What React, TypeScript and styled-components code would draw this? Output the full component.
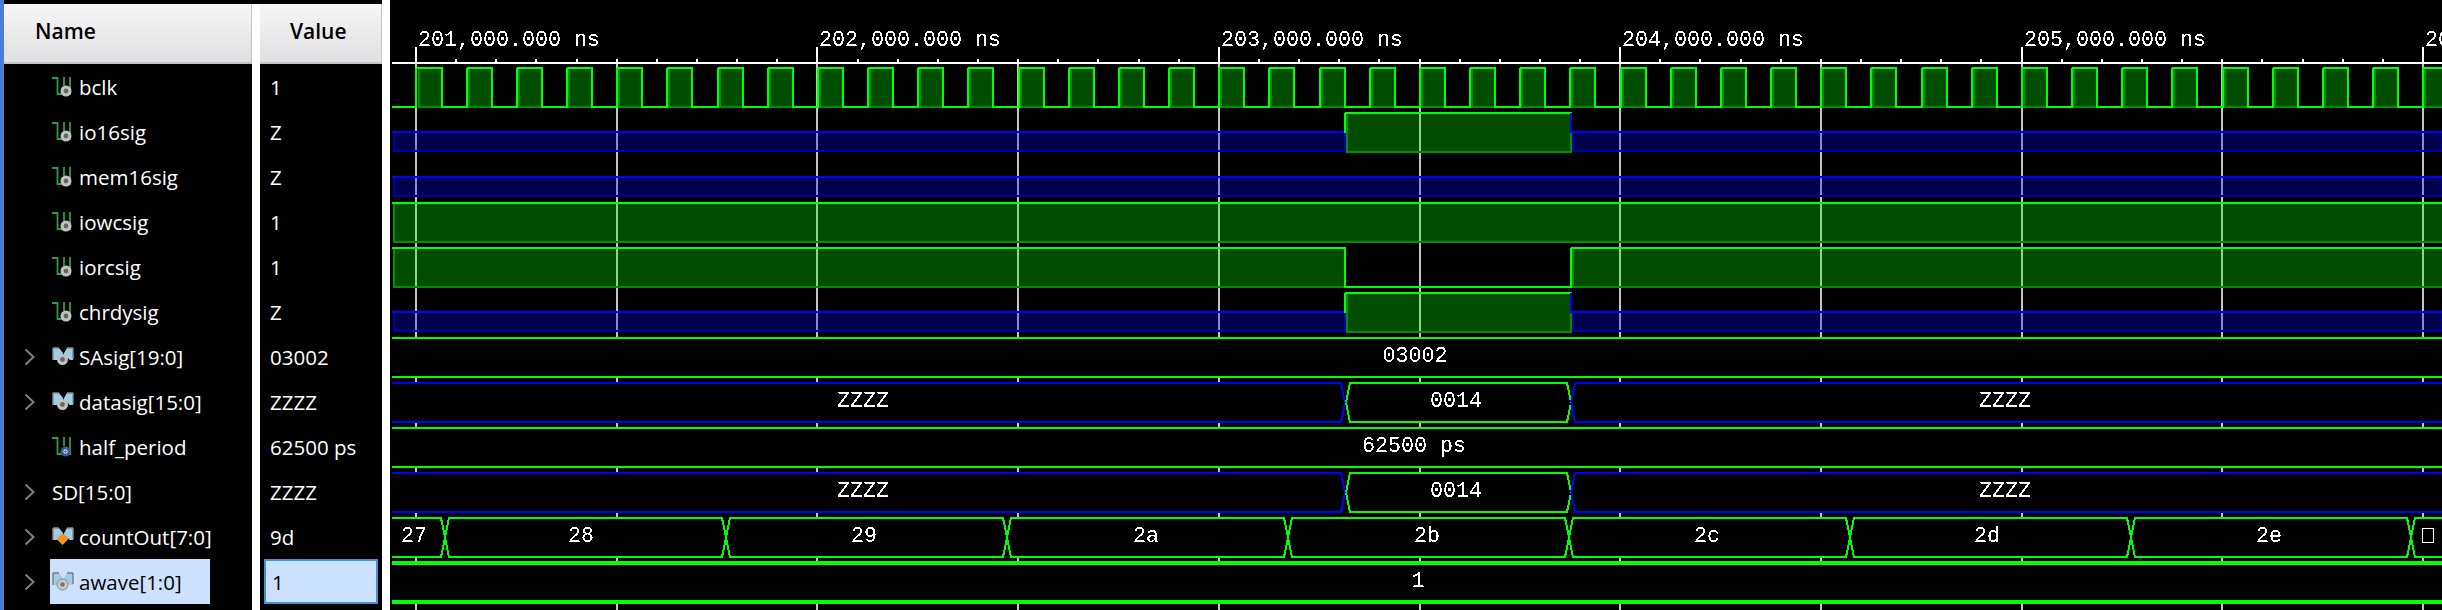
import { FC, ReactNode } from "react";
import styled, { createGlobalStyle } from "styled-components";

const GlobalStyle = createGlobalStyle`
  html, body {
    margin: 0;
    padding: 0;
    background: #ffffff;
    overflow: hidden;
  }
`;

const colors = {
  green: "#00ff00",
  greenEdge: "#008f00",
  greenFill: "rgba(0, 255, 0, 0.3)",
  blue: "#0000ff",
  blueEdge: "#0000a8",
  blueFill: "rgba(0, 0, 255, 0.3)",
  grid: "#c4c4c4",
  selected: "#cce0ff",
};

const Page = styled.div`
  display: flex;
  width: 2442px;
  height: 610px;
  background: #ffffff;
  font-family: "Open Sans", "Noto Sans", sans-serif;
  overflow: hidden;
`;

const Edge = styled.div`
  width: 4px;
  background: #4a7ed6;
`;

const Columns = styled.div`
  display: flex;
  padding-top: 4px;
  background: #000000;
`;

const Column = styled.div<{ $width: number }>`
  width: ${(p) => p.$width}px;
  background: #000000;
`;

const Sash = styled.div`
  width: 8px;
  background: #ffffff;
`;

const HeaderCell = styled.div<{ $indent: number }>`
  box-sizing: border-box;
  height: 60px;
  padding: 0 0 4px ${(p) => p.$indent}px;
  display: flex;
  align-items: center;
  background: linear-gradient(#f6f6f6, #e0e0e2);
  border-bottom: 2px solid #c6c6c6;
  border-right: 1px solid #c6c6c6;
  color: #000000;
  font-size: 21px;
  font-weight: 600;
`;

const NameRow = styled.div`
  height: 45px;
  display: flex;
  align-items: center;
`;

const Twisty = styled.div`
  width: 46px;
  padding-left: 20px;
  box-sizing: border-box;
  display: flex;
  align-items: center;
`;

const NameLabel = styled.div<{ $selected?: boolean }>`
  height: 45px;
  display: flex;
  align-items: center;
  gap: 5px;
  padding: 0 ${(p) => (p.$selected ? 28 : 0)}px 0 2px;
  background: ${(p) => (p.$selected ? colors.selected : "transparent")};
  color: ${(p) => (p.$selected ? "#000000" : "#ffffff")};
  font-size: 20.5px;
`;

const ValueRow = styled.div`
  height: 45px;
  padding-left: 10px;
  display: flex;
  align-items: center;
  color: #ffffff;
  font-size: 20.5px;
`;

const SelectedValue = styled.div`
  box-sizing: border-box;
  width: 114px;
  margin-left: -6px;
  height: 45px;
  padding-left: 6px;
  display: flex;
  align-items: center;
  background: ${colors.selected};
  border: 2px solid #3f93d3;
  color: #000000;
`;

const WavePane = styled.div`
  flex: 1;
  background: #000000;
  overflow: hidden;
`;

const WaveSvg = styled.svg`
  display: block;
`;

const WaveText = styled.text`
  font-family: "Liberation Mono", monospace;
  font-size: 21.67px;
  fill: #ffffff;
`;

// signal icons

type IconKind = "scalar" | "constant" | "bus" | "busDiamond" | "busSelected";

const Ring = () => (
  <>
    <circle cx="14" cy="15" r="5.5" fill="#c2c2c2" />
    <circle cx="14" cy="15" r="2.4" fill="#666666" />
  </>
);

const BusWings: FC<{ edge: string }> = ({ edge }) => (
  <>
    <path d="M1 2h6l4 5v6l-2 1H1z" fill="#9ccfe6" />
    <path d="M21 2h-6l-3 5v2l6 5h3z" fill="#9ccfe6" />
    <path d="M1 2h6M15 2h6M1 2v12M21 2v11" stroke={edge} strokeWidth="1.4" fill="none" />
  </>
);

const SignalIcon: FC<{ kind: IconKind }> = ({ kind }) => (
  <svg width="22" height="22" viewBox="0 0 22 22">
    {kind === "scalar" || kind === "constant" ? (
      <path
        d="M0 2h5.5v16H10M12 1v9M18 1v17h-3"
        stroke="#2f9a45"
        strokeWidth="1.8"
        fill="none"
      />
    ) : null}
    {kind === "scalar" && <Ring />}
    {kind === "constant" && (
      <>
        <circle cx="13.5" cy="15.5" r="5" fill="#3b5a96" />
        <circle cx="13.5" cy="15.5" r="1.7" fill="none" stroke="#ffffff" strokeWidth="1" />
      </>
    )}
    {kind === "bus" && (
      <>
        <BusWings edge="#8a8a8a" />
        <circle cx="10.5" cy="13.5" r="5.5" fill="#c2c2c2" />
        <circle cx="10.5" cy="13.5" r="2.4" fill="#666666" />
      </>
    )}
    {kind === "busDiamond" && (
      <>
        <BusWings edge="#8a8a8a" />
        <path d="M10.5 7l6 6-6 6-6-6z" fill="#f7941d" />
      </>
    )}
    {kind === "busSelected" && (
      <>
        <BusWings edge="#7a7a7a" />
        <circle cx="10.5" cy="13.5" r="5.5" fill="#c8c8c8" stroke="#888888" strokeWidth="1" />
        <circle cx="10.5" cy="13.5" r="2.2" fill="#777777" />
      </>
    )}
  </svg>
);

const Chevron = () => (
  <svg width="11" height="18" viewBox="0 0 11 18">
    <path d="M1.5 1.5l8 7.5-8 7.5" stroke="#808080" strokeWidth="2" fill="none" />
  </svg>
);

type Signal = {
  name: string;
  value: string;
  icon?: IconKind;
  expandable?: boolean;
  selected?: boolean;
};

const signals: Signal[] = [
  { name: "bclk", value: "1", icon: "scalar" },
  { name: "io16sig", value: "Z", icon: "scalar" },
  { name: "mem16sig", value: "Z", icon: "scalar" },
  { name: "iowcsig", value: "1", icon: "scalar" },
  { name: "iorcsig", value: "1", icon: "scalar" },
  { name: "chrdysig", value: "Z", icon: "scalar" },
  { name: "SAsig[19:0]", value: "03002", icon: "bus", expandable: true },
  { name: "datasig[15:0]", value: "ZZZZ", icon: "bus", expandable: true },
  { name: "half_period", value: "62500 ps", icon: "constant" },
  { name: "SD[15:0]", value: "ZZZZ", expandable: true },
  { name: "countOut[7:0]", value: "9d", icon: "busDiamond", expandable: true },
  { name: "awave[1:0]", value: "1", icon: "busSelected", expandable: true, selected: true },
];

// waveform drawing, coordinates are page pixels

const LEFT = 392;
const RIGHT = 2442;
const EDGE_A = 1345;
const EDGE_B = 1571;

type Level = "1" | "0" | "z";
type Span = { from: number; to: number; level: Level };

const BitTrace: FC<{ top: number; spans: Span[] }> = ({ top, spans }) => {
  const low = top + 39;
  const mid = top + 19;
  const fills: ReactNode[] = [];
  const lines: ReactNode[] = [];
  spans.forEach((s, i) => {
    const key = `${s.from}-${i}`;
    if (s.level === "1") {
      fills.push(
        <rect
          key={key}
          x={s.from + 2}
          y={top}
          width={s.to - s.from - 2}
          height={39}
          fill={colors.greenFill}
          stroke={colors.greenEdge}
          strokeWidth="2"
        />,
      );
      lines.push(<line key={key} x1={s.from} x2={s.to + 1} y1={top} y2={top} stroke={colors.green} strokeWidth="2" />);
    } else if (s.level === "z") {
      fills.push(
        <rect
          key={key}
          x={s.from + 2}
          y={mid}
          width={s.to - s.from - 2}
          height={19}
          fill={colors.blueFill}
          stroke={colors.blueEdge}
          strokeWidth="2"
        />,
      );
      lines.push(<line key={key} x1={s.from} x2={s.to} y1={mid} y2={mid} stroke={colors.blue} strokeWidth="2" />);
    } else {
      lines.push(<line key={key} x1={s.from} x2={s.to} y1={low} y2={low} stroke={colors.green} strokeWidth="2" />);
    }
    const next = spans[i + 1];
    if (next) {
      const pair = s.level + next.level;
      const edgeKey = `e${key}`;
      if (pair === "01" || pair === "10") {
        lines.push(<line key={edgeKey} x1={s.to} x2={s.to} y1={top} y2={low + 1} stroke={colors.green} strokeWidth="2" />);
      } else if (pair === "z1") {
        lines.push(<line key={edgeKey} x1={s.to} x2={s.to} y1={top} y2={mid + 1} stroke={colors.green} strokeWidth="2" />);
      } else if (pair === "1z") {
        lines.push(<line key={edgeKey} x1={s.to} x2={s.to} y1={top} y2={mid + 1} stroke={colors.blue} strokeWidth="2" />);
      }
    }
  });
  return (
    <g shapeRendering="crispEdges">
      {fills}
      {lines}
    </g>
  );
};

type BusSegment = { from: number; to: number; color: string; label?: string; labelX?: number };

const busPath = (s: BusSegment, top: number, width: number) => {
  const bottom = top + 39;
  const mid = top + 19.5;
  const lead = s.from <= LEFT ? `M${s.from} ${top}` : `M${s.from} ${mid} L${s.from + 4} ${top}`;
  const closeBottom = s.from <= LEFT ? `L${s.from} ${bottom}` : `L${s.from + 4} ${bottom} L${s.from} ${mid}`;
  if (s.to >= RIGHT) {
    return `${lead} L${s.to} ${top} M${s.to} ${bottom} ${closeBottom}`;
  }
  return `${lead} L${s.to - 4} ${top} L${s.to} ${mid} L${s.to - 4} ${bottom} ${closeBottom}`;
};

const BusTrace: FC<{ top: number; segments: BusSegment[]; thick?: boolean }> = ({ top, segments, thick }) => (
  <g>
    <rect x={LEFT} y={top} width={RIGHT - LEFT} height={39} fill="#000000" />
    {segments.map((s) => (
      <path
        key={s.from}
        d={busPath(s, top, thick ? 4 : 2)}
        stroke={s.color}
        strokeWidth={thick ? 4 : 2}
        fill="none"
        shapeRendering="crispEdges"
      />
    ))}
  </g>
);

const MAJOR = 401.4;
const majors = [0, 1, 2, 3, 4, 5].map((k) => Math.round(416 + MAJOR * k));
const halves = [0, 1, 2, 3, 4].map((k) => Math.round(416 + MAJOR * (k + 0.5)));
const minors = Array.from({ length: 52 }, (_, k) => Math.round(416 + (MAJOR / 10) * k)).filter(
  (x) => !majors.includes(x),
);
const rulerLabels = ["201,000.000 ns", "202,000.000 ns", "203,000.000 ns", "204,000.000 ns", "205,000.000 ns", "206,000.000 ns"];

const clockSpans: Span[] = (() => {
  const spans: Span[] = [{ from: LEFT, to: 416, level: "0" }];
  for (let k = 0; k < 41; k++) {
    const rise = Math.round(416.5 + 50.17 * k);
    const fall = rise + 25;
    const nextRise = Math.round(416.5 + 50.17 * (k + 1));
    spans.push({ from: rise, to: fall, level: "1" });
    spans.push({ from: fall, to: Math.min(nextRise, RIGHT), level: "0" });
  }
  return spans;
})();

const countEdges = [445, 726, 1007, 1288, 1569, 1850, 2131, 2411];
const countLabels = ["27", "28", "29", "2a", "2b", "2c", "2d", "2e"];
const countCenters = [414, 581, 864, 1146, 1427, 1707, 1987, 2269];

const countSegments: BusSegment[] = [
  ...countEdges.map((to, i) => ({
    from: i === 0 ? LEFT : countEdges[i - 1],
    to,
    color: colors.green,
    label: countLabels[i],
    labelX: countCenters[i],
  })),
  { from: 2411, to: RIGHT, color: colors.green },
];

const dataSegments: BusSegment[] = [
  { from: LEFT, to: EDGE_A, color: colors.blue, label: "ZZZZ", labelX: 863 },
  { from: EDGE_A + 1, to: EDGE_B, color: colors.green, label: "0014", labelX: 1456 },
  { from: EDGE_B, to: RIGHT, color: colors.blue, label: "ZZZZ", labelX: 2005 },
];

const BusLabels: FC<{ top: number; segments: BusSegment[] }> = ({ top, segments }) => (
  <>
    {segments
      .filter((s) => s.label)
      .map((s) => (
        <WaveText key={s.from} x={s.labelX} y={top + 24} textAnchor="middle">
          {s.label}
        </WaveText>
      ))}
  </>
);

const Waves = () => (
  <WaveSvg width={2052} height={610} viewBox="390 0 2052 610">
    <defs>
      <filter id="aliased" filterUnits="userSpaceOnUse" x="390" y="0" width="2052" height="610">
        <feComponentTransfer>
          <feFuncA type="discrete" tableValues="0 0 1 1" />
        </feComponentTransfer>
      </filter>
    </defs>

    {majors.concat(halves).map((x) => (
      <line key={x} x1={x} x2={x} y1={63} y2={610} stroke={colors.grid} strokeWidth="2" shapeRendering="crispEdges" />
    ))}

    <g shapeRendering="crispEdges" stroke="#ffffff">
      <line x1={LEFT} x2={RIGHT} y1={63} y2={63} strokeWidth="2" />
      {majors.map((x) => (
        <line key={x} x1={x} x2={x} y1={47} y2={63} strokeWidth="2" />
      ))}
      {minors.map((x) => (
        <line key={x} x1={x} x2={x} y1={59} y2={63} strokeWidth="2" />
      ))}
    </g>

    <BitTrace top={68} spans={clockSpans} />
    <BitTrace
      top={113}
      spans={[
        { from: LEFT, to: EDGE_A, level: "z" },
        { from: EDGE_A, to: EDGE_B, level: "1" },
        { from: EDGE_B, to: RIGHT, level: "z" },
      ]}
    />
    <BitTrace top={158} spans={[{ from: LEFT, to: RIGHT, level: "z" }]} />
    <BitTrace top={203} spans={[{ from: LEFT, to: RIGHT + 4, level: "1" }]} />
    <BitTrace
      top={248}
      spans={[
        { from: LEFT, to: EDGE_A, level: "1" },
        { from: EDGE_A, to: EDGE_B, level: "0" },
        { from: EDGE_B, to: RIGHT + 4, level: "1" },
      ]}
    />
    <BitTrace
      top={293}
      spans={[
        { from: LEFT, to: EDGE_A, level: "z" },
        { from: EDGE_A, to: EDGE_B, level: "1" },
        { from: EDGE_B, to: RIGHT, level: "z" },
      ]}
    />

    <BusTrace top={338} segments={[{ from: LEFT, to: RIGHT, color: colors.green }]} />
    <BusTrace top={383} segments={dataSegments} />
    <BusTrace top={428} segments={[{ from: LEFT, to: RIGHT, color: colors.green }]} />
    <BusTrace top={473} segments={dataSegments} />
    <BusTrace top={518} segments={countSegments} />
    <BusTrace top={563} segments={[{ from: LEFT, to: RIGHT, color: colors.green }]} thick />

    <rect x={2422} y={528} width={11} height={14} fill="none" stroke="#ffffff" strokeWidth="1" shapeRendering="crispEdges" />

    <g filter="url(#aliased)">
      {rulerLabels.map((label, i) => (
        <WaveText key={label} x={majors[i] + 2} y={46}>
          {label}
        </WaveText>
      ))}
      <WaveText x={1415} y={362} textAnchor="middle">03002</WaveText>
      <BusLabels top={383} segments={dataSegments} />
      <WaveText x={1414} y={452} textAnchor="middle">62500 ps</WaveText>
      <BusLabels top={473} segments={dataSegments} />
      <BusLabels top={518} segments={countSegments} />
      <WaveText x={1418} y={587} textAnchor="middle">1</WaveText>
    </g>
  </WaveSvg>
);

const App: FC = () => (
  <Page>
    <GlobalStyle />
    <Edge />
    <Columns>
      <Column $width={248}>
        <HeaderCell $indent={31}>Name</HeaderCell>
        {signals.map((s) => (
          <NameRow key={s.name}>
            <Twisty>{s.expandable && <Chevron />}</Twisty>
            <NameLabel $selected={s.selected}>
              {s.icon && <SignalIcon kind={s.icon} />}
              {s.name}
            </NameLabel>
          </NameRow>
        ))}
      </Column>
      <Sash />
      <Column $width={122}>
        <HeaderCell $indent={30}>Value</HeaderCell>
        {signals.map((s) => (
          <ValueRow key={s.name}>
            {s.selected ? <SelectedValue>{s.value}</SelectedValue> : s.value}
          </ValueRow>
        ))}
      </Column>
    </Columns>
    <Sash />
    <WavePane>
      <Waves />
    </WavePane>
  </Page>
);

export default App;
